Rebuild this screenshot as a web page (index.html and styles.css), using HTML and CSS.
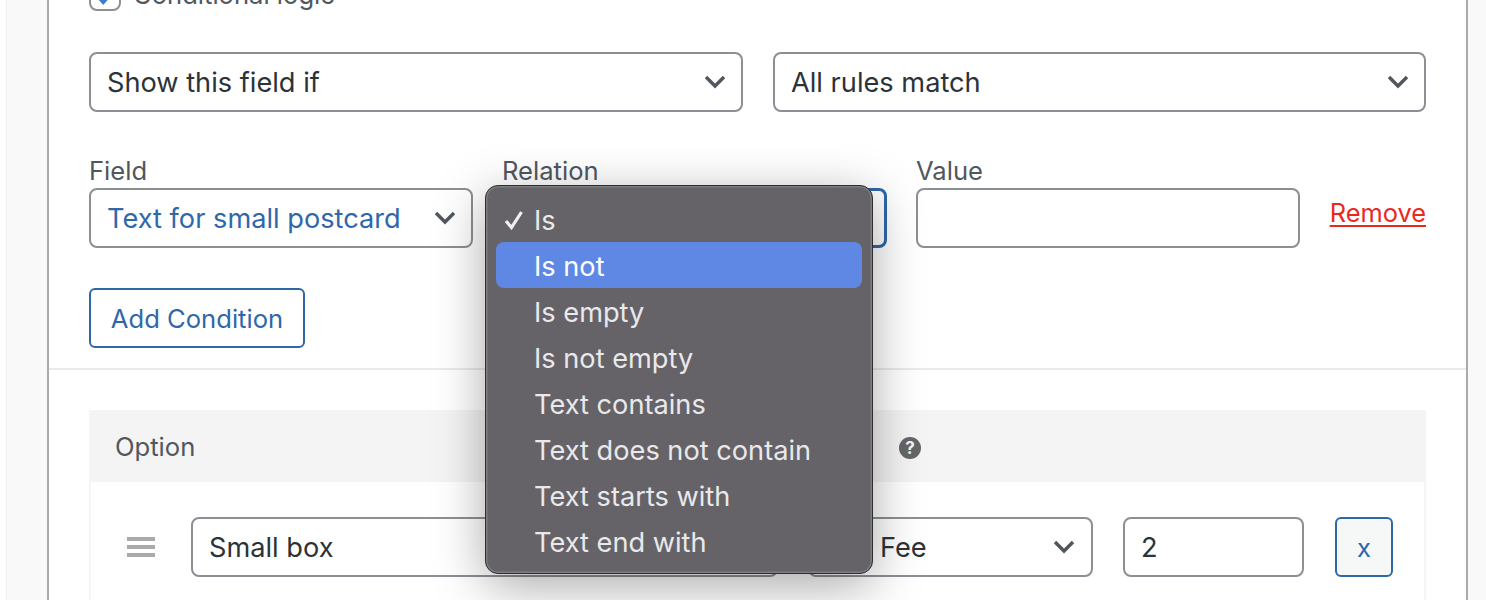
FILE: index.html
```html
<!DOCTYPE html>
<html lang="en">
<head>
<meta charset="utf-8">
<title>Conditional logic</title>
<link rel="stylesheet" href="styles.css">
</head>
<body>
<div class="page">
  <div class="panel">
    <div class="section">
      <div class="check-row">
        <span class="checkbox"><svg class="tick" viewBox="0 0 32 32"><path d="M7 18l3 1 4 1 4-1 3-1-7 8z" fill="#3f7bd0" stroke="#3f7bd0" stroke-width="2" stroke-linejoin="round"/></svg></span>
        <span class="check-label">Conditional logic</span>
      </div>
      <div class="two-col">
        <div class="control">Show this field if<svg class="chev" viewBox="0 0 22 14"><path d="M2 2l9 9 9-9"/></svg></div>
        <div class="control">All rules match<svg class="chev" viewBox="0 0 22 14"><path d="M2 2l9 9 9-9"/></svg></div>
      </div>
      <div class="rule-row">
        <div class="field">
          <div class="field-label">Field</div>
          <div class="control blue-text">Text for small postcard<svg class="chev" viewBox="0 0 22 14"><path d="M2 2l9 9 9-9"/></svg></div>
        </div>
        <div class="field">
          <div class="field-label">Relation</div>
          <div class="control focused"></div>
        </div>
        <div class="field">
          <div class="field-label">Value</div>
          <div class="control"></div>
        </div>
        <a class="remove">Remove</a>
      </div>
      <div class="add-btn">Add Condition</div>
    </div>
    <div class="section table-section">
      <div class="table-head">
        <span class="head-option">Option</span>
        <span class="help">?</span>
      </div>
      <div class="table-row">
        <span class="drag"><i></i><i></i><i></i></span>
        <div class="control option-name">Small box</div>
        <div class="control option-type">Fee<svg class="chev" viewBox="0 0 22 14"><path d="M2 2l9 9 9-9"/></svg></div>
        <div class="control option-price">2</div>
        <div class="x-btn">x</div>
      </div>
    </div>
  </div>
  <div class="menu">
    <div class="menu-item"><svg class="menu-tick" viewBox="0 0 20 20"><path d="M2 11l5.500 6.500L17.500 2"/></svg>Is</div>
    <div class="menu-item active">Is not</div>
    <div class="menu-item">Is empty</div>
    <div class="menu-item">Is not empty</div>
    <div class="menu-item">Text contains</div>
    <div class="menu-item">Text does not contain</div>
    <div class="menu-item">Text starts with</div>
    <div class="menu-item">Text end with</div>
  </div>
</div>
</body>
</html>
```
FILE: styles.css
```css
* { box-sizing: border-box; }
html, body { margin: 0; padding: 0; }
body { font-family: Inter, "Liberation Sans", sans-serif; color: #2c3338; background: #fff; }
.page {
  position: relative;
  width: 1486px;
  height: 600px;
  overflow: hidden;
  padding-left: 47px;
  background:
    linear-gradient(#f0f0f0, #f0f0f0) 6px 0 / 1px 100% no-repeat,
    linear-gradient(#f9f9f9, #f9f9f9) 7px 0 / 1479px 100% no-repeat,
    #fff;
}
.panel {
  width: 1421px;
  height: 600px;
  background: #fff;
  border-left: 2px solid #aaa;
  border-right: 2px solid #aaa;
}
.section { padding: 0 40px; }
.check-row {
  height: 11px;
  overflow: hidden;
  display: flex;
  align-items: flex-end;
  gap: 12px;
  color: #50575e;
  font-size: 25.6px;
  margin-bottom: 41px;
}
.checkbox {
  flex: none;
  width: 32px;
  height: 32px;
  border: 2px solid #8c8f94;
  border-radius: 8px;
  background: #fff;
  display: flex;
}
.tick { width: 28px; height: 28px; }
.check-label { line-height: 32px; }
.control {
  height: 60px;
  border: 2px solid #8c8f94;
  border-radius: 8px;
  background: #fff;
  display: flex;
  align-items: center;
  justify-content: space-between;
  padding: 0 16px;
  font-size: 27.2px;
  color: #2c3338;
  white-space: nowrap;
}
.control .chev { transform: translateX(1px); }
.chev {
  width: 22px;
  height: 14px;
  fill: none;
  stroke: #50575e;
  stroke-width: 3.4;
}
.two-col {
  display: grid;
  grid-template-columns: 654px 653px;
  gap: 30px;
  margin-bottom: 45px;
}
.rule-row {
  display: grid;
  grid-template-columns: 384px 385px 384px 97px;
  column-gap: 29px;
  align-items: end;
}
.field-label {
  font-size: 25.6px;
  line-height: 28px;
  height: 31px;
  color: #50575e;
}
.blue-text { color: #2f68a9; }
.focused { border: 3px solid #2f68a9; }
.remove {
  align-self: center;
  justify-self: end;
  margin-top: 31px;
  margin-bottom: 12px;
  color: #e9291e;
  font-size: 25.4px;
  text-decoration: underline;
  text-underline-offset: 3px;
  text-decoration-thickness: 2px;
  white-space: nowrap;
}
.add-btn {
  width: 216px;
  height: 60px;
  margin-top: 40px;
  margin-bottom: 20px;
  padding-top: 1px;
  border: 2px solid #2f68a9;
  border-radius: 6px;
  color: #2f68a9;
  background: #fff;
  font-size: 25.6px;
  display: flex;
  align-items: center;
  justify-content: center;
}
.table-section {
  border-top: 2px solid #eaeaea;
  padding-top: 40px;
}
.table-head {
  height: 72px;
  background: #f4f4f4;
  display: flex;
  align-items: center;
  padding-left: 26px;
  font-size: 25.6px;
  color: #50575e;
}
.head-option { width: 784px; }
.help {
  width: 22px;
  height: 22px;
  border-radius: 50%;
  background: #666;
  color: #f4f4f4;
  font-size: 17px;
  font-weight: 700;
  display: flex;
  align-items: center;
  justify-content: center;
  transform: translateY(2px);
}
.table-row {
  height: 120px;
  border-left: 2px solid #f5f5f5;
  border-right: 2px solid #f5f5f5;
  display: flex;
  align-items: flex-start;
  padding-top: 35px;
  padding-left: 36px;
}
.drag {
  width: 28px;
  margin-top: 20px;
  margin-right: 36px;
  display: flex;
  flex-direction: column;
  gap: 4px;
}
.drag i { display: block; height: 4px; background: #aaa; }
.option-name { width: 587px; margin-right: 30px; }
.option-type { width: 285px; margin-right: 30px; padding-left: 70px; padding-right: 17px; }
.option-price { width: 181px; margin-right: 31px; padding-left: 16px; }
.x-btn {
  width: 58px;
  height: 60px;
  border: 2px solid #2f68a9;
  border-radius: 6px;
  background: #f6f7f7;
  color: #2f68a9;
  font-size: 25.6px;
  display: flex;
  align-items: center;
  justify-content: center;
}
.menu {
  position: absolute;
  left: 485px;
  top: 185px;
  width: 388px;
  height: 389px;
  padding: 10px 10px 0;
  background: #656368;
  border: 1px solid #2e2d30;
  border-radius: 13px;
  box-shadow: inset 0 0 0 1.500px #7f7d82, 0 12px 50px rgba(0, 0, 0, .34);
}
.menu-item {
  position: relative;
  height: 46px;
  padding-top: 2px;
  padding-left: 38px;
  display: flex;
  align-items: center;
  font-size: 27.2px;
  color: #e9e9eb;
  border-radius: 8px;
}
.menu-item.active { background: #5f88e4; color: #fff; }
.menu-tick {
  position: absolute;
  left: 8px;
  top: 14px;
  width: 20px;
  height: 20px;
  fill: none;
  stroke: #f0f0f0;
  stroke-width: 3.2;
}
```
